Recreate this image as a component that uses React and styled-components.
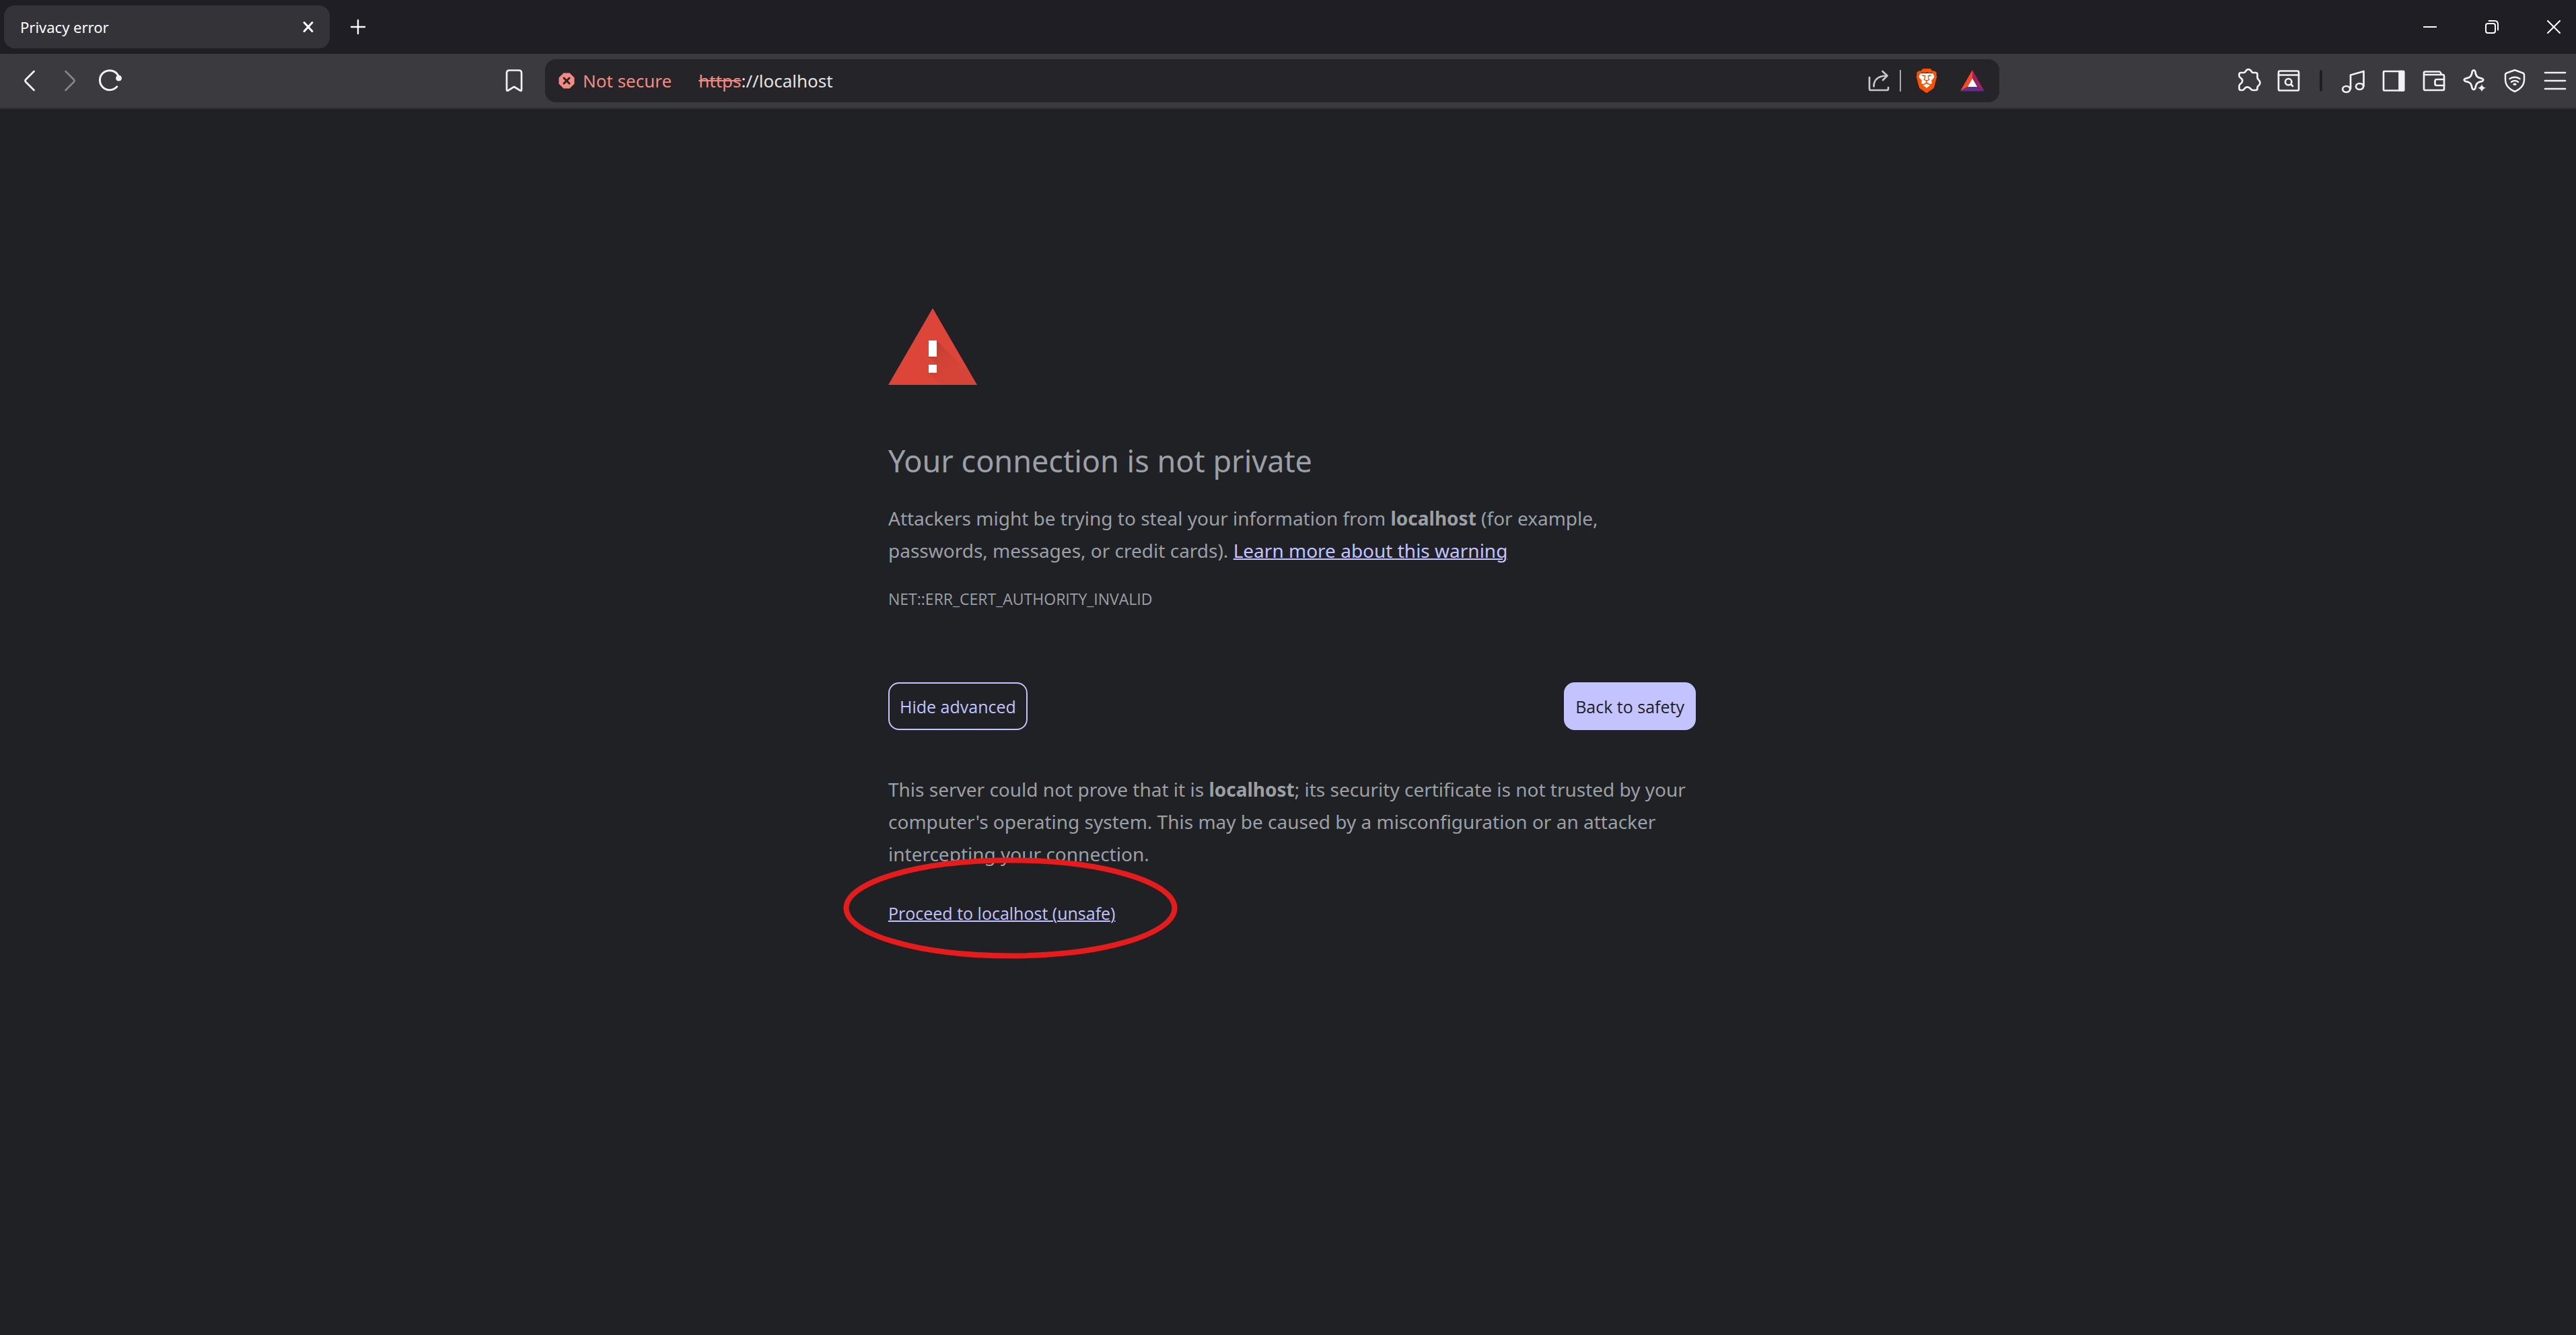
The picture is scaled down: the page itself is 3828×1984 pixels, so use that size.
import React, { useState } from 'react';
import styled, { createGlobalStyle } from 'styled-components';
import { SiBrave } from 'react-icons/si';

const GlobalStyle = createGlobalStyle`
  *, *::before, *::after { box-sizing: border-box; }
  body {
    margin: 0;
    background: #202124;
    color: #9aa0a6;
    font-family: "Noto Sans", "Open Sans", sans-serif;
  }
  button, input { font: inherit; }
`;

const Window = styled.div`
  min-height: 100vh;
  display: flex;
  flex-direction: column;
`;

const TabStrip = styled.header`
  height: 80px;
  display: flex;
  align-items: center;
  padding: 0 3px 0 6px;
  background: #1f1e24;
`;

const Tab = styled.div`
  width: 484px;
  height: 64px;
  display: flex;
  align-items: center;
  justify-content: space-between;
  padding: 0 12px 0 24px;
  border-radius: 16px;
  background: #343338;
  color: #ffffff;
  font-size: 22px;
  line-height: 32px;
`;

const IconButton = styled.button`
  width: ${({ $narrow }) => ($narrow ? 40 : 60)}px;
  height: 60px;
  flex: none;
  display: flex;
  align-items: center;
  justify-content: center;
  padding: 0;
  border: 0;
  background: none;
  color: ${({ $color }) => $color || '#f2f2f5'};
`;

const NewTab = styled(IconButton)`
  margin-left: 12px;
`;

const WindowControls = styled.div`
  margin-left: auto;
  display: flex;
  gap: 32px;
`;

const Toolbar = styled.div`
  height: 82px;
  display: grid;
  grid-template-columns: 810px minmax(0, 1fr) 857px;
  align-items: center;
  background: #3b3a3f;
  border-bottom: 2px solid #2f3034;
`;

const NavGroup = styled.nav`
  display: flex;
  padding: 0 16px 0 14px;
`;

const BookmarkButton = styled(IconButton)`
  margin-left: auto;
`;

const AddressBar = styled.div`
  height: 64px;
  display: flex;
  align-items: center;
  padding: 0 10px 0 20px;
  border-radius: 16px;
  background: #252429;
  font-size: 26px;
  line-height: 36px;
`;

const Security = styled.button`
  display: flex;
  align-items: center;
  gap: 12px;
  padding: 0;
  margin-right: 40px;
  border: 0;
  background: none;
  color: #f38b82;
  white-space: nowrap;
`;

const UrlField = styled.label`
  flex: 1;
  min-width: 0;
  display: flex;
  align-items: center;
  color: #f38b82;
`;

const UrlInput = styled.input`
  flex: 1;
  min-width: 0;
  height: 36px;
  padding: 0;
  border: 0;
  outline: 0;
  background: none;
  color: #e3e3e6;
`;

const BarActions = styled.div`
  display: flex;
  align-items: center;
`;

const BarDivider = styled.span`
  width: 2px;
  height: 32px;
  margin: 0 8px 0 1px;
  background: #a9a8ad;
`;

const LionButton = styled(IconButton)`
  margin-right: 8px;
`;

const Extensions = styled.div`
  display: flex;
  align-items: center;
  justify-content: flex-end;
  padding-right: 1px;
`;

const Divider = styled.span`
  width: 4px;
  height: 32px;
  margin: 0 16px;
  border-radius: 2px;
  background: #1f1e24;
`;

const Page = styled.main`
  flex: 1;
  padding: 296px 0 64px 12px;
`;

const Interstitial = styled.section`
  max-width: 1200px;
  margin: 0 auto;
  display: flex;
  flex-direction: column;
  align-items: flex-start;
`;

const Title = styled.h1`
  margin: 84px 0 32px;
  font-size: 45px;
  line-height: 58px;
  font-weight: 400;
`;

const Body = styled.p`
  margin: 0;
  font-size: 28px;
  line-height: 48px;
`;

const ErrorCode = styled.p`
  margin: 32px 0 108px;
  font-family: "Open Sans", "Noto Sans", sans-serif;
  font-size: 23px;
  line-height: 32px;
`;

const TextLink = styled.a`
  color: #c2c3ff;
  text-decoration: underline;
  text-decoration-thickness: 2px;
`;

const Actions = styled.div`
  align-self: stretch;
  display: flex;
  justify-content: space-between;
  margin-bottom: 64px;
`;

const ActionButton = styled.button`
  height: 71px;
  padding: 0 15px;
  border: 2px solid #c2c3ff;
  border-radius: 16px;
  background: ${({ $primary }) => ($primary ? '#c2c3ff' : 'transparent')};
  color: ${({ $primary }) => ($primary ? '#202124' : '#c2c3ff')};
  font-family: "Open Sans", "Noto Sans", sans-serif;
  font-size: 25px;
  line-height: 36px;
`;

const Proceed = styled.div`
  position: relative;
  margin-top: 44px;
  font-family: "Open Sans", "Noto Sans", sans-serif;
  font-size: 25px;
  line-height: 40px;
`;

const Highlight = styled.svg`
  position: absolute;
  top: -63px;
  left: -67px;
  width: 497px;
  height: 151px;
  pointer-events: none;
`;

const Icon = ({ children, size = 40, stroke = 2.7 }) => (
  <svg
    width={size}
    height={size}
    viewBox={`0 0 ${size} ${size}`}
    fill="none"
    stroke="currentColor"
    strokeWidth={stroke}
    strokeLinecap="round"
    strokeLinejoin="round"
    aria-hidden="true"
  >
    {children}
  </svg>
);

const WarningIcon = () => (
  <svg width="132" height="114" viewBox="0 0 132 114" aria-hidden="true">
    <defs>
      <linearGradient id="shade" gradientUnits="userSpaceOnUse" x1="60" y1="60" x2="96" y2="92">
        <stop offset="0" stopColor="#3e2723" stopOpacity="0.24" />
        <stop offset="0.45" stopColor="#3e2723" stopOpacity="0.1" />
        <stop offset="1" stopColor="#3e2723" stopOpacity="0.04" />
      </linearGradient>
      <clipPath id="sign">
        <path d="M66 0 132 114H0Z" />
      </clipPath>
    </defs>
    <path d="M66 0 132 114H0Z" fill="#dd4538" />
    <g clipPath="url(#sign)" fill="url(#shade)">
      <path d="M72 48 138 114H78L60 96 72 84 60 72Z" />
    </g>
    <path d="M60 48h12v24H60zM60 84h12v12H60z" fill="#fff" />
  </svg>
);

export default function App() {
  const [url, setUrl] = useState('://localhost');
  return (
    <Window>
      <GlobalStyle />
      <TabStrip>
        <Tab>
          <span>Privacy error</span>
          <IconButton $narrow $color="#ffffff" aria-label="Close tab">
            <Icon size={20} stroke={3}><path d="M4 3.500 16 16.500M16 3.500 4 16.500" /></Icon>
          </IconButton>
        </Tab>
        <NewTab $color="#ffffff" aria-label="New tab">
          <Icon size={24} stroke={2.4}><path d="M12 2V22M2 12H22" /></Icon>
        </NewTab>
        <WindowControls>
          <IconButton $color="#ffffff" aria-label="Minimise">
            <Icon size={20} stroke={2}><path d="M0 10H20" /></Icon>
          </IconButton>
          <IconButton $color="#ffffff" aria-label="Restore">
            <Icon size={20} stroke={2}>
              <rect x="1" y="5" width="14" height="14" rx="3" />
              <path d="M5.500 1H14Q19 1 19 6V14.500" />
            </Icon>
          </IconButton>
          <IconButton $color="#ffffff" aria-label="Close window">
            <Icon size={20} stroke={2}><path d="M1 1 19 19M19 1 1 19" /></Icon>
          </IconButton>
        </WindowControls>
      </TabStrip>

      <Toolbar>
        <NavGroup>
          <IconButton aria-label="Back">
            <Icon><path d="M26.500 6 14.500 18Q12.500 20 14.500 22L26.500 34" /></Icon>
          </IconButton>
          <IconButton $color="#85848a" aria-label="Forward">
            <Icon><path d="M13.500 6 25.500 18Q27.500 20 25.500 22L13.500 34" /></Icon>
          </IconButton>
          <IconButton aria-label="Reload">
            <Icon stroke={3}>
              <path d="M32 13A14.500 14.500 0 1 0 29.800 28.800" />
              <circle cx="32.500" cy="16.200" r="4.400" fill="currentColor" stroke="none" />
            </Icon>
          </IconButton>
          <BookmarkButton aria-label="Bookmark this page">
            <Icon><path d="M9 8.500Q9 4.500 13 4.500H27Q31 4.500 31 8.500V33.500Q31 35.500 29 34.500L20 29 11 34.500Q9 35.500 9 33.500Z" /></Icon>
          </BookmarkButton>
        </NavGroup>

        <AddressBar>
          <Security>
            <Icon size={24} stroke={3}>
              <path d="M7.500 0.500H16.500L23.500 7.500V16.500L16.500 23.500H7.500L0.500 16.500V7.500Z" fill="currentColor" stroke="none" />
              <path d="M8 8 16 16M16 8 8 16" stroke="#252429" />
            </Icon>
            <span>Not secure</span>
          </Security>
          <UrlField>
            <s>https</s>
            <UrlInput aria-label="Address" value={url} onChange={(e) => setUrl(e.target.value)} />
          </UrlField>
          <BarActions>
            <IconButton $color="#c8c7cc" aria-label="Share">
              <Icon>
                <path d="M6 15V32Q6 34 8 34H32Q34 34 34 32V30" />
                <path d="M12.500 28.500C12.500 18 20 12.500 32 12.500" />
                <path d="M25.500 6 32.500 12.500 26 19" />
              </Icon>
            </IconButton>
            <BarDivider />
            <LionButton aria-label="Shields">
              <svg width="36" height="36" viewBox="0 0 36 36" aria-hidden="true">
                <path d="M7 7H29L30 16 24 27 18 32 12 27 6 16Z" fill="#fff" />
                <SiBrave size={36} color="#fb5200" />
              </svg>
            </LionButton>
            <IconButton aria-label="Rewards">
              <svg width="36" height="32" viewBox="0 0 36 32" aria-hidden="true">
                <path d="M18 0 0 31.500 10.800 25 18 12.500Z" fill="#ff4724" />
                <path d="M18 0 36 31.500 25.200 25 18 12.500Z" fill="#9e1f63" />
                <path d="M0 31.500H36L25.200 25H10.800Z" fill="#662d91" />
                <path d="M18 12.500 25.200 25H10.800Z" fill="#fff" />
              </svg>
            </IconButton>
          </BarActions>
        </AddressBar>

        <Extensions>
          <IconButton aria-label="Extensions">
            <Icon><path d="M9 8H13.500C16.500 8 15.500 3.200 20.300 3.200S24 8 27 8H31Q33.500 8 33.500 10.500V15.500C33.500 18.500 37.500 18.500 37.500 23S33.500 27 33.500 30V31.500Q33.500 34 31 34H26.500C23 34 23.500 29.300 18.700 29.300S14.500 34 11.500 34H9Q6.500 34 6.500 31.500V27.500C6.500 24 11.300 24.500 11.300 20S6.500 16 6.500 13V10.500Q6.500 8 9 8Z" /></Icon>
          </IconButton>
          <IconButton aria-label="Search tabs">
            <Icon>
              <rect x="5" y="5.500" width="30" height="29" rx="2" />
              <path d="M5 11.500H35" />
              <circle cx="19.700" cy="21.700" r="4.700" />
              <path d="M23.300 25.300 26 28" />
            </Icon>
          </IconButton>
          <Divider />
          <IconButton aria-label="Playlist">
            <Icon>
              <ellipse cx="9.700" cy="32.500" rx="5.500" ry="4.500" />
              <ellipse cx="29.500" cy="28.500" rx="5.500" ry="4.500" />
              <path d="M16 32V11.500L35.500 6V28" />
            </Icon>
          </IconButton>
          <IconButton aria-label="Sidebar">
            <Icon>
              <rect x="5" y="6" width="30" height="28.500" rx="1" />
              <path d="M28.500 6H35V34.500H28.500Z" fill="currentColor" />
            </Icon>
          </IconButton>
          <IconButton aria-label="Wallet">
            <Icon>
              <path d="M5 11H33Q35 11 35 13V32Q35 34 33 34H7Q5 34 5 32V8.500Q5 6.500 7 6.500H27.500Q30 6.500 31 11" />
              <path d="M35 18H24Q21.500 18 21.500 20.500V24.500Q21.500 27 24 27H35" />
            </Icon>
          </IconButton>
          <IconButton aria-label="Assistant">
            <Icon>
              <path d="M16.800 6Q19 2.800 21.200 6C22 13 24 15.500 31.500 16.800Q35 18.700 31.500 20.800C24 22 22.500 24.500 21.200 31.500Q19 34.800 16.800 31.500C15.500 24.500 14 22 6.500 20.800Q3 18.700 6.500 16.800C14 15.500 16 13 16.800 6Z" />
              <path d="M31 25Q31.900 29.800 37 30.700 31.900 31.700 31 36.500 30.100 31.700 25 30.700 30.100 29.800 31 25Z" fill="currentColor" stroke="none" />
            </Icon>
          </IconButton>
          <IconButton aria-label="VPN">
            <Icon stroke={2.5}>
              <path d="M20 4Q20 4 21 4.500L32 8.500Q34 9.300 34 11.500V18C34 27 27 33 20 36 13 33 6 27 6 18V11.500Q6 9.300 8 8.500L19 4.500Z" />
              <path d="M12.500 17Q20 12.500 27.500 17M15 21.700Q20 18.300 25 21.700" />
              <ellipse cx="20" cy="25.200" rx="2.700" ry="1.800" fill="currentColor" stroke="none" />
            </Icon>
          </IconButton>
          <IconButton aria-label="Menu">
            <Icon><path d="M5 8H35M5 20H35M5 32H35" /></Icon>
          </IconButton>
        </Extensions>
      </Toolbar>

      <Page>
        <Interstitial>
          <WarningIcon />
          <Title>Your connection is not private</Title>
          <Body>
            Attackers might be trying to steal your information from <strong>localhost</strong> (for example,
            <br />
            passwords, messages, or credit cards). <TextLink href="#learn">Learn more about this warning</TextLink>
          </Body>
          <ErrorCode>NET::ERR_CERT_AUTHORITY_INVALID</ErrorCode>
          <Actions>
            <ActionButton>Hide advanced</ActionButton>
            <ActionButton $primary>Back to safety</ActionButton>
          </Actions>
          <Body>
            This server could not prove that it is <strong>localhost</strong>; its security certificate is not trusted by your
            <br />
            computer's operating system. This may be caused by a misconfiguration or an attacker
            <br />
            intercepting your connection.
          </Body>
          <Proceed>
            <TextLink href="#proceed">Proceed to localhost (unsafe)</TextLink>
            <Highlight viewBox="0 0 497 151" aria-hidden="true">
              <ellipse cx="248.500" cy="75.500" rx="244" ry="71" fill="none" stroke="#e61c1c" strokeWidth="8" />
            </Highlight>
          </Proceed>
        </Interstitial>
      </Page>
    </Window>
  );
}
